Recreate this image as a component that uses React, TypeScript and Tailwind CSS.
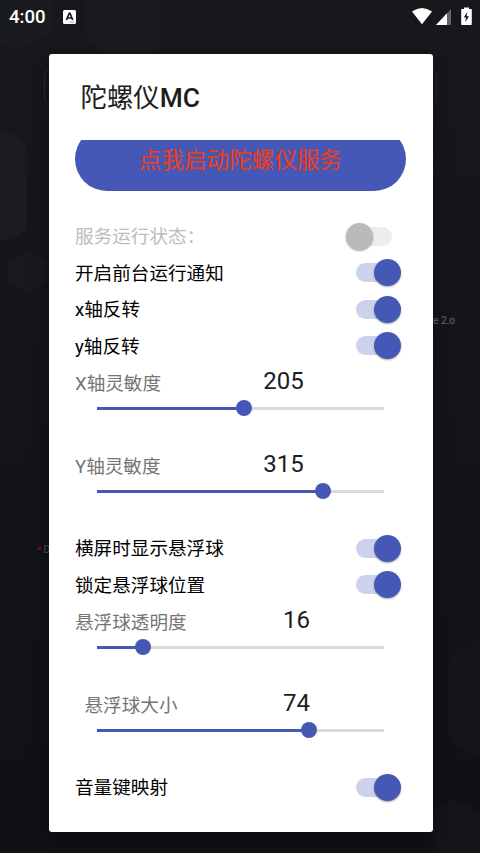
import clsx from "clsx";

type SwitchRowProps = {
  label: string;
  checked?: boolean;
  disabled?: boolean;
};

function SwitchRow({ label, checked = false, disabled = false }: SwitchRowProps) {
  return (
    <div className="flex h-[36.5px] items-center justify-between pl-[26.5px] pr-[41px]">
      <span className={clsx("pt-[2px] text-[18.6px] leading-none", disabled ? "text-[#bcbcbc]" : "text-black")}>
        {label}
      </span>
      <button
        role="switch"
        aria-checked={checked}
        disabled={disabled}
        className={clsx("relative mb-px h-[19px] w-[36px] rounded-full", checked ? "bg-[#cdd2ec]" : "bg-[#ededed]")}
      >
        <span
          className={clsx(
            "absolute top-[-4px] size-[27px] rounded-full shadow-[0_1px_2px_rgba(0,0,0,0.35)]",
            checked ? "left-[18px] bg-[#4658b6]" : "left-[-9.5px] bg-[#bababa]"
          )}
        />
      </button>
    </div>
  );
}

type SliderRowProps = {
  label: string;
  value: number;
  percent: number;
  indent?: boolean;
};

function SliderRow({ label, value, percent, indent = false }: SliderRowProps) {
  return (
    <div className="h-[83px]">
      <div className={clsx("flex h-[36.5px] items-center", indent ? "pl-[36px]" : "pl-[26.5px]")}>
        <span className="pt-[2.5px] text-[18.6px] leading-none text-[#757575]">{label}</span>
        <span
          className={clsx(
            "ml-auto w-[60px] pb-[3px] text-center text-[24px] leading-none text-[#1d1d1d]",
            value < 100 ? "mr-[106px]" : "mr-[119px]"
          )}
        >
          {value}
        </span>
      </div>
      <div className="relative ml-[48px] mr-[48.5px] mt-[5.5px] h-[3px] bg-[#dadada]">
        <div className="h-full bg-[#4658b6]" style={{ width: `${percent}%` }} />
        <span
          className="absolute top-[-6.5px] size-4 -translate-x-1/2 rounded-full bg-[#4658b6]"
          style={{ left: `${percent}%` }}
        />
      </div>
    </div>
  );
}

function StatusBar() {
  return (
    <header className="relative flex h-[34px] items-center pl-[9px] pr-[7px] text-white">
      <span className="text-[18.6px] font-medium leading-none">4:00</span>
      <svg className="ml-[17px]" width="14" height="15" viewBox="0 0 14 15">
        <rect x="0" y="0" width="13" height="14" rx="1.5" fill="#fff" />
        <path d="M3.500 10 6.200 3.300h.8l2.700 6.700M4.500 8h4.200" fill="none" stroke="#17181c" strokeWidth="1.7" />
        <path d="M6.500 12h5" stroke="#777" strokeWidth=".7" />
      </svg>
      <svg className="ml-auto" width="61" height="20" viewBox="0 0 61 20">
        <path d="M0 4.500Q10-2.500 20 4.500L10 17.200Z" fill="#fff" />
        <path d="M39 2v16H24Z" fill="#63646a" />
        <path d="M35 6.300v11.700H24Z" fill="#fff" />
        <path d="M52 .5h5V2h2q.8 0 .8.8v14.400q0 .8-.8.8h-9q-.8 0-.8-.8V2.800q0-.8.8-.8h2Z" fill="#fff" />
        <path d="M55.300 5 51.800 10.500h2.200L53.300 15 57 9.300h-2.300Z" fill="#17181c" />
      </svg>
    </header>
  );
}

function Backdrop() {
  return (
    <svg className="absolute inset-0" width="480" height="853" viewBox="0 0 480 853">
      <g fill="#1a1c20">
        <path d="M0 127l19 11q8 5 8 14v70q0 9-8 13L0 242Z" />
        <path d="M0 0h54v26q0 4-4 7L22 48q-6 3-12 0L0 43Z" fill="#191b1f" />
        <path d="M86 0h73v46q0 8-8 8h-42L92 44q-6-4-6-12Z" fill="#191b1f" />
        <path d="m27 250 19 11v22l-19 10-19-10v-22Z" fill="#17191c" />
        <path d="M480 638 452 655q-4 3-4 8v70q0 6 5 9l27 17Z" fill="#131519" />
        <path d="m433 811 21-12 26 13v41h-47Z" fill="#131519" />
      </g>
      <rect x="44.500" y="70.500" width="392" height="32" rx="4" fill="none" stroke="#292b2f" />
      <circle cx="39.500" cy="548.500" r="1.800" fill="#7d0b12" />
      <text x="43.500" y="552.500" fontSize="10" fill="#54565a">D</text>
      <text x="455" y="323.500" fontSize="10" textAnchor="end" fill="#66686c">ne 2.o</text>
    </svg>
  );
}

export default function App() {
  return (
    <div
      lang="zh-CN"
      className="relative h-[853px] w-[480px] overflow-hidden bg-linear-to-b from-[#17181c] to-[#0f1115] font-['Roboto','Noto_Sans_CJK_SC',sans-serif]"
    >
      <Backdrop />
      <StatusBar />
      <main className="relative ml-[48.5px] mt-[20px] h-[778px] w-[384px] overflow-hidden rounded-[3px] bg-white shadow-[0_6px_16px_rgba(0,0,0,0.4)]">
        <h1 className="flex h-[86px] items-center pl-[32px] pt-[2px] text-[26.4px] font-medium leading-none text-[#1d1d1d]">
          <span className="font-normal">陀螺仪</span>MC
        </h1>
        <div className="flex h-[51px] flex-col justify-end overflow-hidden pl-[26.5px] pr-[26.5px]">
          <button className="h-[64px] w-full shrink-0 rounded-full bg-[#4658b6] pt-[5px] text-[22.6px] leading-none text-[#f43b14]">
            点我启动陀螺仪服务
          </button>
        </div>
        <section className="pt-[27.5px]">
          <SwitchRow label="服务运行状态：" disabled />
          <SwitchRow label="开启前台运行通知" checked />
          <SwitchRow label="x轴反转" checked />
          <SwitchRow label="y轴反转" checked />
          <SliderRow label="X轴灵敏度" value={205} percent={51.2} />
          <SliderRow label="Y轴灵敏度" value={315} percent={78.8} />
          <SwitchRow label="横屏时显示悬浮球" checked />
          <SwitchRow label="锁定悬浮球位置" checked />
          <SliderRow label="悬浮球透明度" value={16} percent={16} />
          <SliderRow label="悬浮球大小" value={74} percent={74} indent />
          <SwitchRow label="音量键映射" checked />
        </section>
      </main>
    </div>
  );
}
